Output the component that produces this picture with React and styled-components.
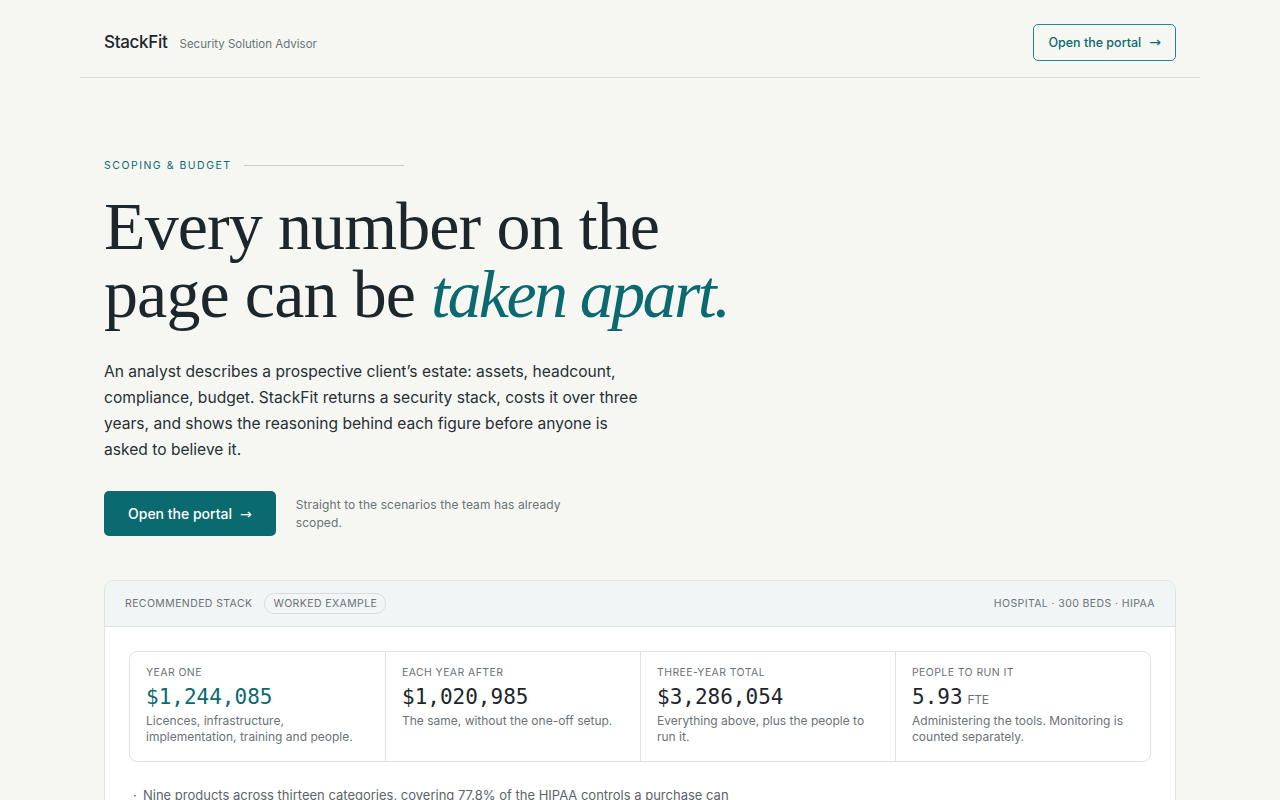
import styled, { createGlobalStyle } from 'styled-components';

const GlobalStyle = createGlobalStyle`
  * { box-sizing: border-box; }
  body {
    margin: 0;
    background: #f6f7f2;
    color: #1d262b;
    font-family: Inter, "Noto Sans", sans-serif;
  }
`;

const metrics = [
  { label: 'Year one', value: '$1,244,085', note: 'Licences, infrastructure, implementation, training and people.', accent: true },
  { label: 'Each year after', value: '$1,020,985', note: 'The same, without the one-off setup.' },
  { label: 'Three-year total', value: '$3,286,054', note: 'Everything above, plus the people to run it.' },
  { label: 'People to run it', value: '5.93', unit: 'FTE', note: 'Administering the tools. Monitoring is counted separately.' },
];

export default function App() {
  return (
    <>
      <GlobalStyle />
      <Page>
        <Header>
          <Brand>
            <Logo>StackFit</Logo>
            <Tagline>Security Solution Advisor</Tagline>
          </Brand>
          <GhostButton href="#">
            Open the portal <Arrow>→</Arrow>
          </GhostButton>
        </Header>

        <Hero>
          <Eyebrow>Scoping &amp; Budget</Eyebrow>
          <Headline>
            Every number on the<br />
            page can be <em>taken apart.</em>
          </Headline>
          <Lead>
            An analyst describes a prospective client’s estate: assets, headcount,
            compliance, budget. StackFit returns a security stack, costs it over three
            years, and shows the reasoning behind each figure before anyone is
            asked to believe it.
          </Lead>
          <Actions>
            <PrimaryButton href="#">
              Open the portal <Arrow>→</Arrow>
            </PrimaryButton>
            <SideNote>Straight to the scenarios the team has already scoped.</SideNote>
          </Actions>
        </Hero>

        <Card>
          <CardHead>
            <HeadLeft>
              <HeadLabel>Recommended stack</HeadLabel>
              <Pill>Worked example</Pill>
            </HeadLeft>
            <HeadLabel>Hospital · 300 beds · HIPAA</HeadLabel>
          </CardHead>
          <CardBody>
            <Metrics>
              {metrics.map((m) => (
                <Metric key={m.label}>
                  <MetricLabel>{m.label}</MetricLabel>
                  <MetricValue $accent={m.accent}>
                    {m.value}
                    {m.unit && <Unit>{m.unit}</Unit>}
                  </MetricValue>
                  <MetricNote>{m.note}</MetricNote>
                </Metric>
              ))}
            </Metrics>
            <Bullets>
              <li>Nine products across thirteen categories, covering 77.8% of the HIPAA controls a purchase can address.</li>
            </Bullets>
          </CardBody>
        </Card>
      </Page>
    </>
  );
}

const Page = styled.div`
  width: 1120px;
  margin: 0 auto;
`;

const Header = styled.header`
  height: 78px;
  padding: 7px 24px 0;
  display: flex;
  align-items: center;
  justify-content: space-between;
  border-bottom: 1px solid #dcdfda;
`;

const Brand = styled.div`
  display: flex;
  align-items: baseline;
  gap: 12px;
`;

const Logo = styled.span`
  font-size: 17px;
  font-weight: 500;
  letter-spacing: -0.3px;
  color: #1d262b;
`;

const Tagline = styled.span`
  font-size: 11.5px;
  color: #6b7276;
`;

const Arrow = styled.span`
  margin-left: 8px;
  font-family: "DejaVu Sans", sans-serif;
  font-size: 14px;
`;

const GhostButton = styled.a`
  display: inline-flex;
  align-items: center;
  height: 37px;
  padding: 0 14px;
  border: 1px solid #1d8a8f;
  border-radius: 5px;
  color: #0b6a70;
  font-size: 12.5px;
  font-weight: 500;
  text-decoration: none;
`;

const Hero = styled.section`
  padding: 81px 24px 44px;
`;

const Eyebrow = styled.div`
  display: flex;
  align-items: center;
  gap: 12px;
  font-size: 10.5px;
  letter-spacing: 1.5px;
  text-transform: uppercase;
  color: #0b6a70;

  &::after {
    content: '';
    width: 160px;
    height: 1px;
    background: #c9ccc8;
  }
`;

const Headline = styled.h1`
  margin: 20px 0 0;
  font-family: "Liberation Serif", "DejaVu Serif", serif;
  font-weight: 400;
  font-size: 68px;
  line-height: 68px;
  letter-spacing: -0.9px;
  color: #1d262b;

  em {
    color: #0b6a70;
    letter-spacing: -2.6px;
  }
`;

const Lead = styled.p`
  margin: 31px 0 0;
  max-width: 545px;
  font-size: 15.6px;
  line-height: 26px;
  color: #263035;
`;

const Actions = styled.div`
  margin-top: 28px;
  display: flex;
  align-items: center;
  gap: 20px;
`;

const PrimaryButton = styled.a`
  display: inline-flex;
  align-items: center;
  height: 45px;
  padding: 0 24px;
  background: #0b6a70;
  border-radius: 5px;
  color: #fff;
  font-size: 14px;
  font-weight: 500;
  text-decoration: none;
`;

const SideNote = styled.p`
  margin: 0;
  width: 275px;
  font-size: 12px;
  line-height: 18px;
  letter-spacing: 0.1px;
  color: #6b7276;
`;

const Card = styled.section`
  margin: 0 24px;
  background: #fff;
  border: 1px solid #dfe3e2;
  border-radius: 10px;
  overflow: hidden;
`;

const CardHead = styled.div`
  height: 46px;
  padding: 0 20px;
  display: flex;
  align-items: center;
  justify-content: space-between;
  background: #f1f5f5;
  border-bottom: 1px solid #dfe3e2;
`;

const HeadLeft = styled.div`
  display: flex;
  align-items: center;
  gap: 12px;
`;

const HeadLabel = styled.span`
  font-size: 10.5px;
  letter-spacing: 0.4px;
  text-transform: uppercase;
  color: #6b7276;
`;

const Pill = styled.span`
  padding: 3px 8px;
  border: 1px solid #d7dcdc;
  border-radius: 10px;
  font-size: 10.5px;
  letter-spacing: 0.4px;
  text-transform: uppercase;
  color: #6b7276;
`;

const CardBody = styled.div`
  padding: 24px 24px 20px;
`;

const Metrics = styled.div`
  display: grid;
  grid-template-columns: repeat(4, 1fr);
  border: 1px solid #dfe3e2;
  border-radius: 8px;
`;

const Metric = styled.div`
  padding: 14px 16px 15px;
  min-height: 109px;

  & + & {
    border-left: 1px solid #dfe3e2;
  }
`;

const MetricLabel = styled.div`
  font-size: 10.5px;
  letter-spacing: 0.4px;
  text-transform: uppercase;
  color: #6b7276;
`;

const MetricValue = styled.div`
  margin-top: 4px;
  height: 28px;
  display: flex;
  align-items: baseline;
  font-family: "DejaVu Sans Mono", "Liberation Mono", monospace;
  font-size: 21px;
  line-height: 28px;
  color: ${(p) => (p.$accent ? '#0b6a70' : '#1d262b')};
`;

const Unit = styled.span`
  margin-left: 5px;
  font-family: Inter, sans-serif;
  font-size: 12px;
  letter-spacing: -0.3px;
  color: #6b7276;
`;

const MetricNote = styled.div`
  margin-top: 2px;
  font-size: 12px;
  line-height: 16px;
  color: #6b7276;
`;

const Bullets = styled.ul`
  margin: 23px 0 0;
  padding: 0 0 0 14px;
  list-style: none;

  li {
    position: relative;
    font-size: 13px;
    line-height: 20px;
    color: #5c6468;
    max-width: 600px;
  }

  li::before {
    content: '·';
    position: absolute;
    left: -10px;
  }
`;
